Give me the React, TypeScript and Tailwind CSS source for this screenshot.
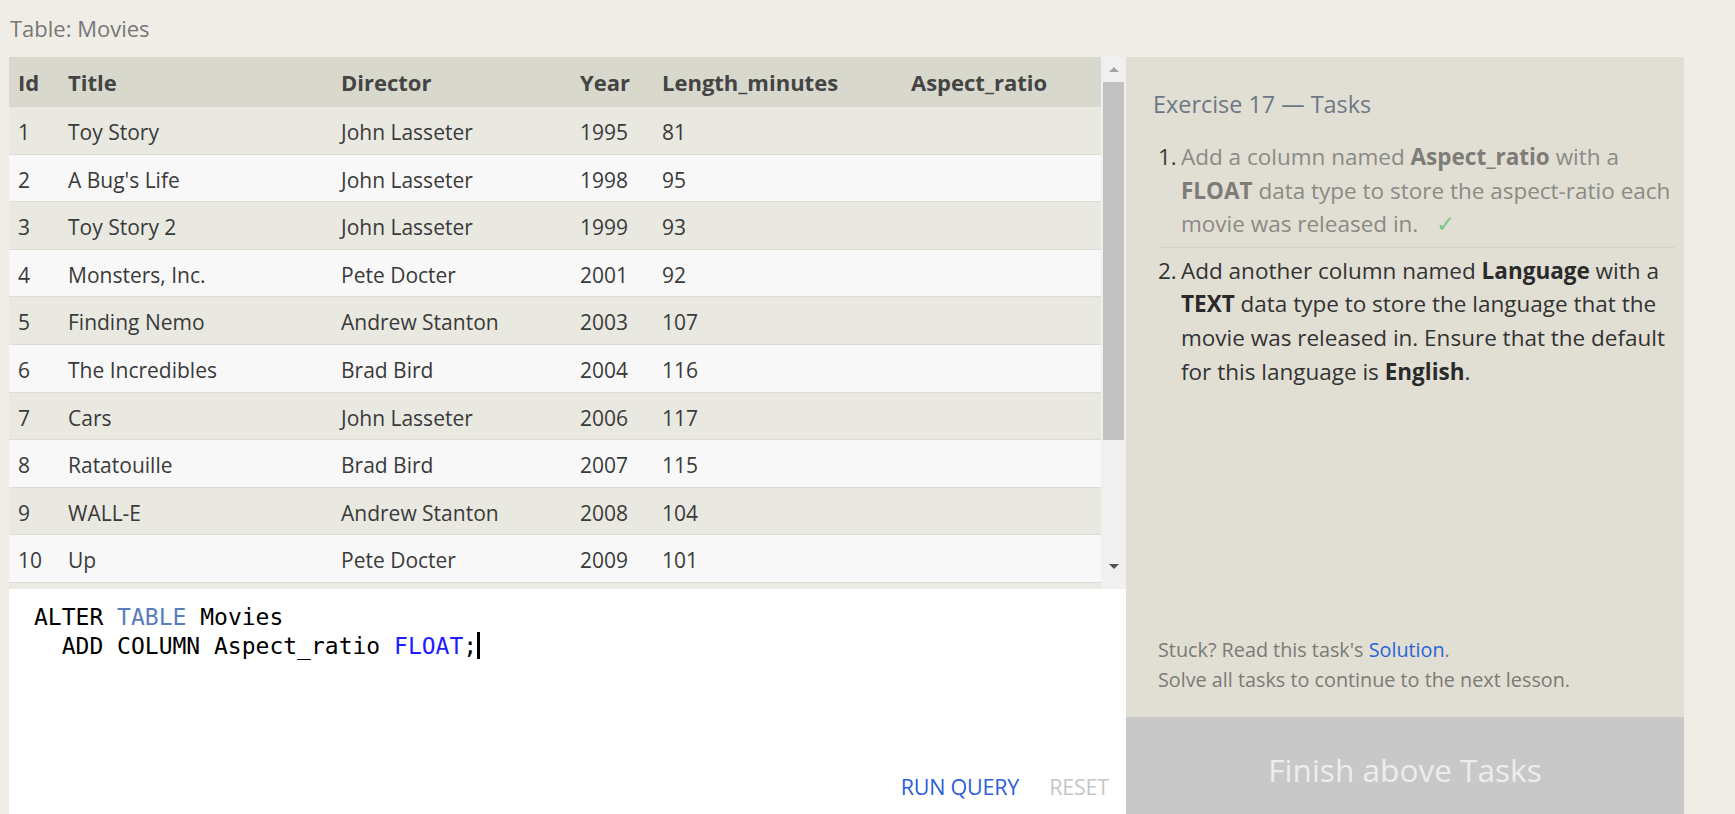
import React from "react";

const movies = [
  [1, "Toy Story", "John Lasseter", 1995, 81],
  [2, "A Bug's Life", "John Lasseter", 1998, 95],
  [3, "Toy Story 2", "John Lasseter", 1999, 93],
  [4, "Monsters, Inc.", "Pete Docter", 2001, 92],
  [5, "Finding Nemo", "Andrew Stanton", 2003, 107],
  [6, "The Incredibles", "Brad Bird", 2004, 116],
  [7, "Cars", "John Lasseter", 2006, 117],
  [8, "Ratatouille", "Brad Bird", 2007, 115],
  [9, "WALL-E", "Andrew Stanton", 2008, 104],
  [10, "Up", "Pete Docter", 2009, 101],
];

const columns = ["Id", "Title", "Director", "Year", "Length_minutes", "Aspect_ratio"];
// column widths in px, first column starts at the table's left edge
const widths = ["w-[50px]", "w-[273px]", "w-[239px]", "w-[82px]", "w-[249px]", "w-[199px]"];

const Scrollbar = () => (
  <div className="w-[25px] h-full bg-[#f0f0f0] flex flex-col items-center">
    {/* up arrow (disabled) */}
    <div className="h-[25px] w-full flex items-center justify-center">
      <div className="w-0 h-0 border-l-[5px] border-r-[5px] border-b-[5px] border-l-transparent border-r-transparent border-b-[#a3a3a3]" />
    </div>
    <div className="w-[21px] h-[358px] bg-[#c1c1c1]" />
    <div className="flex-1" />
    {/* down arrow */}
    <div className="h-[27px] w-full flex items-start justify-center pt-[2px]">
      <div className="w-0 h-0 border-l-[5px] border-r-[5px] border-t-[5px] border-l-transparent border-r-transparent border-t-[#505050]" />
    </div>
  </div>
);

const MoviesTable = () => (
  <div className="h-[532px] w-[1117px] flex bg-[#ebeae4]">
    <div className="w-[1092px] flex flex-col">
      <div className="h-[50px] flex items-center bg-[#d9d8cd] text-[#444] font-bold text-[22px]">
        {columns.map((c, i) => (
          <div key={c} className={`${widths[i]} pl-[9px]`}>
            {c}
          </div>
        ))}
      </div>
      {movies.map((m, r) => (
        <div
          key={m[0] as number}
          className={`h-[47.6px] pt-[5px] flex items-center border-b border-[#dddcd5] text-[#3a3a3a] text-[21px] ${
            r % 2 === 0 ? "bg-[#e9e8e1]" : "bg-[#f8f8f8]"
          }`}
        >
          {m.map((v, i) => (
            <div key={i} className={`${widths[i]} pl-[9px] whitespace-nowrap`}>
              {v}
            </div>
          ))}
          <div className={widths[5]} />
        </div>
      ))}
    </div>
    <Scrollbar />
  </div>
);

const Editor = () => (
  <div className="h-[240px] w-[1117px] bg-white flex flex-col">
    <pre className="pl-[25px] pt-[14px] font-['DejaVu_Sans_Mono',monospace] text-[23px] leading-[29px] text-black">
      ALTER <span className="text-[#5a7dba]">TABLE</span> Movies{"\n"}
      {"  "}ADD COLUMN Aspect_ratio <span className="text-[#1d1dff]">FLOAT</span>;
      <span className="inline-block w-[3px] h-[27px] bg-black align-[-5px]" />
    </pre>
    <div className="flex-1" />
    <div className="flex justify-end gap-[30px] pr-[17px] pb-[26px] text-[21.5px] tracking-[-0.2px]">
      <span className="text-[#2b5fd9]">RUN QUERY</span>
      <span className="text-[#c6c6c6]">RESET</span>
    </div>
  </div>
);

const TasksPanel = () => (
  <div className="w-[558px] h-[766px] bg-[#e1dfd4] flex flex-col">
    <div className="pl-[27px] pt-[32px] text-[23.4px] leading-[30px] text-[#6e7785]">
      Exercise 17 — Tasks
    </div>
    <ol className="mt-[21px] pl-[32px] pr-[9px] text-[22.5px] leading-[33.6px]">
      <li className="flex pb-[6px] border-b border-[#d5d3c9] text-[#8b8a84]">
        <span className="w-[23px] shrink-0 text-[#3a3a3a]">1.</span>
        <span>
          Add a column named <b className="text-[#7d7c77]">Aspect_ratio</b> with a{" "}
          <b className="text-[#7d7c77]">FLOAT</b> data type to store the aspect-ratio each movie was
          released in.<span className="ml-[18px] text-[#74c983]">✓</span>
        </span>
      </li>
      <li className="flex pt-[6px] text-[#333]">
        <span className="w-[23px] shrink-0">2.</span>
        <span>
          Add another column named <b className="text-[#2a2a2a]">Language</b> with a{" "}
          <b className="text-[#2a2a2a]">TEXT</b> data type to store the language that the movie was
          released in. Ensure that the default for this language is{" "}
          <b className="text-[#2a2a2a]">English</b>.
        </span>
      </li>
    </ol>
    <div className="flex-1" />
    <div className="pl-[32px] mb-[22px] text-[19.8px] leading-[30px] text-[#7b7a76]">
      <div>
        Stuck? Read this task's <span className="text-[#2b62d9]">Solution</span>.
      </div>
      <div>Solve all tasks to continue to the next lesson.</div>
    </div>
    <div className="h-[106px] bg-[#c8c8c8] flex items-center justify-center text-[31.6px] text-[#ededed]">
      Finish above Tasks
    </div>
  </div>
);

const App = () => {
  return (
    <div className="w-[1735px] h-[814px] overflow-hidden bg-[#efede6] font-['Open_Sans',sans-serif]">
      <div className="h-[57px] pl-[10px] pt-[13px] text-[22px] leading-[30px] text-[#777]">
        Table: Movies
      </div>
      <div className="flex pl-[9px]">
        <div className="flex flex-col">
          <MoviesTable />
          <Editor />
        </div>
        <TasksPanel />
      </div>
    </div>
  );
};

export default App;
